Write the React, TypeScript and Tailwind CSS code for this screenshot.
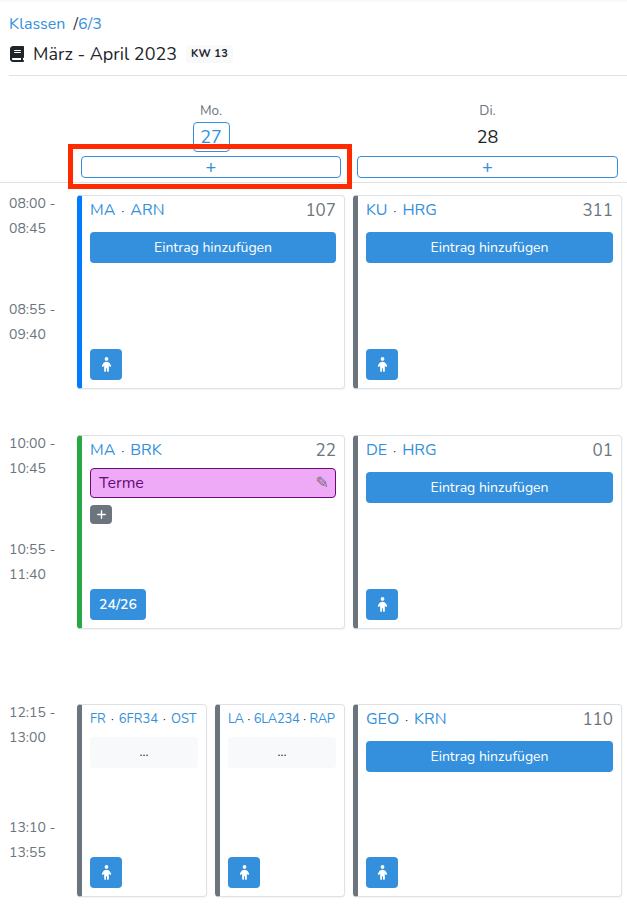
import React from 'react';
import { FaBook, FaChild, FaPlus } from 'react-icons/fa6';

const ChildButton = () => (
    <button className="w-[32px] h-[31px] bg-[#3490dc] rounded-[4px] flex items-center justify-center text-white">
        <FaChild size={15} />
    </button>
);

const AddButton = () => (
    <button className="block w-full h-[31px] bg-[#3490dc] rounded-[4px] text-white text-[14px] leading-[32px]">Eintrag hinzufügen</button>
);

const GrayBox = () => (
    <div className="-mt-[4px] h-[31px] bg-[#f8f9fa] rounded-[4px] text-center text-[13px] leading-[31px]">...</div>
);

const Title = ({ parts, small, dense }: { parts: string[]; small?: boolean; dense?: boolean }) => {
    const size = small ? 'text-[13px]' : 'text-[16px]';
    const dot = dense ? 'mx-[1px]' : small ? 'mx-[2px]' : 'mx-[3px]';
    return (
        <span className={`${size} ${dense ? 'tracking-[-0.3px]' : ''} text-[#3490dc] leading-[20px] whitespace-nowrap`}>
            {parts.map((p, i) => (
                <React.Fragment key={p}>
                    {i > 0 && <span className={`text-[#212529] text-[12px] ${dot}`}> · </span>}
                    {p}
                </React.Fragment>
            ))}
        </span>
    );
};

interface CardProps {
    parts: string[];
    room?: string;
    bar?: string;
    small?: boolean;
    dense?: boolean;
    children?: React.ReactNode;
    footer?: React.ReactNode;
}

const Card = ({ parts, room, bar = 'border-l-[#6c757d]', small, dense, children, footer }: CardProps) => (
    <div className={`flex-1 min-w-0 flex flex-col bg-white border border-[#dee2e6] border-l-[5px] ${bar} rounded-[4px] shadow-[0_1px_2px_rgba(0,0,0,0.05)] pl-[8px] pr-[8px] pb-[8px]`}>
        <div className="flex justify-between items-center h-[27px] pt-[1px]">
            <Title parts={parts} small={small} dense={dense} />
            {room && <span className="text-[17px] text-[#6c757d] leading-[20px] pt-[2px]">{room}</span>}
        </div>
        <div className="flex-1 pt-[9px]">{children}</div>
        {footer ?? <ChildButton />}
    </div>
);

const Times = ({ t, wide }: { t: string[]; wide?: boolean }) => (
    <div className="w-[77px] shrink-0 pl-[9px] -mt-[4px] text-[14px] leading-[25px] text-[#6c757d]">
        <div>{t[0]} -</div>
        <div>{t[1]}</div>
        <div className={wide ? 'mt-[65px]' : 'mt-[56px]'}>{t[2]} -</div>
        <div>{t[3]}</div>
    </div>
);

export default function App() {
    return (
        <div className="relative w-[627px] h-[907px] overflow-hidden bg-white text-[#212529] font-['Nunito','Noto_Sans',sans-serif]">
            <div className="h-[2px] bg-[#f8f9fa]" />
            <div className="px-[9px] pt-[12px] text-[16px] leading-[20px]">
                <span className="text-[#3490dc]">Klassen</span> <span className="ml-[4px]">/</span><span className="text-[#3490dc]">6/3</span>
            </div>
            <div className="flex items-center ml-[9px] mt-[9px] pb-[10px] border-b border-[#dee2e6] h-[33px]">
                <FaBook size={16} className="text-[#212529] mr-[8px]" />
                <span className="text-[18px] leading-[22px]">März - April 2023</span>
                <span className="ml-[9px] px-[5px] h-[18px] leading-[18px] rounded-[4px] bg-[#f8f9fa] text-[11px] font-bold tracking-[0.3px]">KW 13</span>
            </div>

            <div className="flex pl-[73px] mt-[26px] pb-[4px] border-b border-[#dee2e6]">
                <div className="w-[276px] flex flex-col items-center px-[8px]">
                    <div className="text-[13.6px] leading-[18px] text-[#6c757d]">Mo.</div>
                    <div className="w-[37px] h-[30px] mt-[2px] border border-[#3490dc] rounded-[4px] text-[18px] leading-[28px] text-[#3490dc] text-center">27</div>
                    <button className="w-full h-[22px] mt-[4px] border border-[#3490dc] rounded-[4px] text-[#3490dc] text-[18px] leading-[19px] font-semibold">+</button>
                </div>
                <div className="w-[277px] flex flex-col items-center px-[8px]">
                    <div className="text-[13.6px] leading-[18px] text-[#6c757d]">Di.</div>
                    <div className="h-[30px] mt-[2px] text-[18px] leading-[30px]">28</div>
                    <button className="w-full h-[22px] mt-[4px] border border-[#3490dc] rounded-[4px] text-[#3490dc] text-[18px] leading-[19px] font-semibold">+</button>
                </div>
            </div>

            <div className="flex h-[194px] mt-[12px] pr-[5px]">
                <Times t={['08:00', '08:45', '08:55', '09:40']} />
                <div className="flex-1 min-w-0 grid grid-cols-[268px_269px] gap-[8px]">
                    <Card parts={['MA', 'ARN']} room="107" bar="border-l-[#007bff]"><AddButton /></Card>
                    <Card parts={['KU', 'HRG']} room="311"><AddButton /></Card>
                </div>
            </div>

            <div className="flex h-[194px] mt-[46px] pr-[5px]">
                <Times t={['10:00', '10:45', '10:55', '11:40']} />
                <div className="flex-1 min-w-0 grid grid-cols-[268px_269px] gap-[8px]">
                    <Card
                        parts={['MA', 'BRK']}
                        room="22"
                        bar="border-l-[#28a745]"
                        footer={<button className="w-[56px] h-[31px] bg-[#3490dc] rounded-[4px] text-white text-[14px] font-semibold">24/26</button>}
                    >
                        <div className="-mt-[4px] h-[30px] flex items-center justify-between pl-[8px] pr-[6px] bg-[#eeaaf7] border border-[#6a0a78] rounded-[4px] text-[#6a0a78] text-[16px]">
                            <span>Terme</span>
                            <span className="font-['DejaVu_Sans',sans-serif] text-[16px] text-[#7a6a80]">✎</span>
                        </div>
                        <div className="mt-[7px] w-[22px] h-[19px] rounded-[4px] bg-[#6c757d] flex items-center justify-center text-white"><FaPlus size={11} /></div>
                    </Card>
                    <Card parts={['DE', 'HRG']} room="01"><AddButton /></Card>
                </div>
            </div>

            <div className="flex h-[193px] mt-[75px] pr-[5px]">
                <Times t={['12:15', '13:00', '13:10', '13:55']} wide />
                <div className="flex-1 min-w-0 grid grid-cols-[268px_269px] gap-[8px]">
                    <div className="min-w-0 flex gap-[8px]">
                        <Card parts={['FR', '6FR34', 'OST']} small><GrayBox /></Card>
                        <Card parts={['LA', '6LA234', 'RAP']} small dense><GrayBox /></Card>
                    </div>
                    <Card parts={['GEO', 'KRN']} room="110"><AddButton /></Card>
                </div>
            </div>

            {/* red highlight drawn over the first add button */}
            <div className="absolute left-[68px] top-[144px] w-[284px] h-[45px] border-[5px] border-[#ff2a00]" />
        </div>
    );
}
